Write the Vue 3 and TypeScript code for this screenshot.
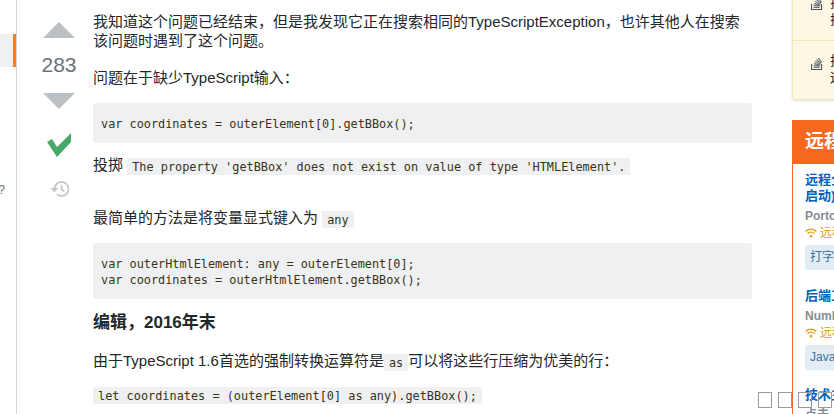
<template>
  <div class="page">
    <nav class="leftnav">
      <div class="nav-active"></div>
      <div class="nav-help">?</div>
    </nav>

    <div class="votes">
      <div class="arrow-up"></div>
      <div class="count">283</div>
      <div class="arrow-down"></div>
      <svg class="check" width="24" height="24" viewBox="0 0 24 24">
        <path d="M0 9 L5 6 L10 14 L24 0 L24 9 L10 24 Z" fill="#48a868" />
      </svg>
      <svg class="history" width="19" height="18" viewBox="0 0 19 18">
        <path d="M4.5 9a7 7 0 1 1 2.2 5.1" fill="none" stroke="#c4c8cc" stroke-width="1.8" />
        <path d="M0.5 8h8l-4 4.5z" fill="#c4c8cc" />
        <path d="M11.5 5v4.5l3 2" fill="none" stroke="#c4c8cc" stroke-width="1.6" />
      </svg>
    </div>

    <main class="post">
      <p class="first">我知道这个问题已经结束，但是我发现它正在搜索相同的TypeScriptException，也许其他人在搜索该问题时遇到了这个问题。</p>
      <p>问题在于缺少TypeScript输入：</p>
      <pre class="block">var coordinates = outerElement[0].getBBox();</pre>
      <p class="thrown">投掷 <code>The property 'getBBox' does not exist on value of type 'HTMLElement'.</code></p>
      <p class="simple">最简单的方法是将变量显式键入为 <code>any</code></p>
      <pre class="block second">var outerHtmlElement: any = outerElement[0];
var coordinates = outerHtmlElement.getBBox();</pre>
      <h2>编辑，2016年末</h2>
      <p class="since">由于TypeScript 1.6首选的强制转换运算符是<code>as</code>可以将这些行压缩为优美的行：</p>
      <p class="last"><code>let coordinates = (outerElement[0] as any).getBBox();</code></p>
    </main>

    <aside class="side">
      <div class="notice">
        <div class="notice-row first-row">
          <svg class="so" width="12" height="15" viewBox="0 0 12 15">
            <path d="M0.5 9v5.5h10V9" fill="none" stroke="#50555a" stroke-width="1.2" />
            <path d="M2.5 12.5h6M2.6 10.6l6 .5M3 8.6l5.8 1.5M4 6.6l5.3 2.6M5.4 4.6l4.6 3.6M7.2 3l3.4 4.4" fill="none" stroke="#6a737c" stroke-width="1.1" />
          </svg>
          <span class="notice-text">拉<br />拉</span>
        </div>
        <div class="notice-row">
          <svg class="so" width="12" height="15" viewBox="0 0 12 15">
            <path d="M0.5 9v5.5h10V9" fill="none" stroke="#50555a" stroke-width="1.2" />
            <path d="M2.5 12.5h6M2.6 10.6l6 .5M3 8.6l5.8 1.5M4 6.6l5.3 2.6M5.4 4.6l4.6 3.6M7.2 3l3.4 4.4" fill="none" stroke="#6a737c" stroke-width="1.1" />
          </svg>
          <span class="notice-text">拉<br />远</span>
        </div>
      </div>

      <div class="jobs">
        <div class="jobs-head">远程工作</div>
        <div class="jobs-body">
          <div v-for="job in jobs" :key="job.org" class="job">
            <div class="job-title">
              <template v-for="(line, i) in job.title" :key="line"><br v-if="i" />{{ line }}</template>
            </div>
            <div class="job-org">{{ job.org }}</div>
            <div v-if="job.tag" class="job-remote">
              <svg width="12" height="10" viewBox="0 0 12 10">
                <path d="M0.6 3.4a7.8 7.8 0 0 1 10.8 0M2.5 5.6a5 5 0 0 1 7 0" fill="none" stroke="#e4a82c" stroke-width="1.5" />
                <circle cx="6" cy="8.2" r="1.4" fill="#e4a82c" />
              </svg>
              <span>远程</span>
            </div>
            <div v-if="job.tag" class="job-tag">{{ job.tag }}</div>
          </div>
        </div>
      </div>
    </aside>

    <div class="tofu">
      <span v-for="n in 4" :key="n" class="tofu-box"></span>
    </div>
  </div>
</template>

<script setup lang="ts">
interface Job {
  title: string[];
  org: string;
  tag?: string;
}

const jobs: Job[] = [
  { title: ['远程全栈工程师', '启动)'], org: 'Portol', tag: '打字稿' },
  { title: ['后端工程师'], org: 'Numbers', tag: 'Java' },
  { title: ['技术主管'], org: '点击' }
];
</script>

<style>
html,
body {
  margin: 0;
  overflow: hidden;
  background: #fff;
}
</style>

<style scoped>
.page {
  position: relative;
  display: flex;
  width: 834px;
  height: 414px;
  overflow: hidden;
  font-family: Arial, "Liberation Sans", "Noto Sans CJK SC", sans-serif;
  color: #242729;
}

.leftnav {
  flex: none;
  width: 16px;
  height: 414px;
  border-right: 1px solid #d6d9dc;
  padding-top: 34px;
  box-sizing: content-box;
}

.nav-active {
  height: 33px;
  background: #eff0f1;
  border-right: 3px solid #f48024;
  box-sizing: border-box;
}

.nav-help {
  margin-top: 116px;
  margin-left: -2px;
  font-size: 13px;
  line-height: 14px;
  color: #6a737c;
}

.votes {
  flex: none;
  width: 76px;
  height: 414px;
  display: flex;
  flex-direction: column;
  align-items: center;
  padding: 22px 0 0 8px;
  box-sizing: border-box;
}

.arrow-up,
.arrow-down {
  width: 0;
  height: 0;
  border-left: 16px solid transparent;
  border-right: 16px solid transparent;
}

.arrow-up {
  border-bottom: 16px solid #bbc0c4;
}

.arrow-down {
  border-top: 16px solid #bbc0c4;
}

.count {
  font-size: 21px;
  line-height: 30px;
  margin: 12px 0 13px;
  color: #6a737c;
}

.check {
  margin-top: 24px;
}

.history {
  margin-top: 23px;
}

.post {
  flex: none;
  width: 659px;
  font-size: 15px;
  line-height: 19px;
  padding-top: 12px;
}

.post p {
  margin: 0 0 16px;
}

.post .first {
  margin-bottom: 18px;
}

.block {
  margin: 0 0 12px;
  padding: 13px 8px 11px;
  background: #eff0f1;
  border-radius: 3px;
  font-family: "DejaVu Sans Mono", monospace;
  font-size: 11.85px;
  line-height: 16px;
  color: #393318;
}

.block.second {
  margin-bottom: 13px;
}

code {
  font-family: "DejaVu Sans Mono", monospace;
  font-size: 11.88px;
  background: #eff0f1;
  padding: 1.5px 5px;
  color: #393318;
}

.post .thrown {
  margin-bottom: 32px;
}

.post .simple {
  margin-bottom: 14px;
}

.post .since {
  margin-bottom: 12px;
}

h2 {
  margin: 0 0 17px;
  font-size: 17px;
  line-height: 22px;
  font-weight: 700;
}

.side {
  flex: none;
  width: 42px;
  margin-left: 40px;
  height: 414px;
  white-space: nowrap;
}

.notice {
  display: flow-root;
  width: 200px;
  height: 100px;
  background: #fdf7e3;
  border: 1px solid #f1e5bc;
  border-top: none;
  border-radius: 0 0 3px 3px;
  box-shadow: 0 1px 3px rgba(0, 0, 0, 0.12);
  box-sizing: border-box;
}

.notice-row {
  display: flex;
  gap: 7px;
  padding: 11px 0 0 18px;
  font-size: 13px;
  line-height: 17px;
}

.notice-row.first-row {
  height: 46px;
  margin-top: -6px;
  padding-top: 0;
  border-bottom: 1px solid #f1e5bc;
}

.so {
  flex: none;
  margin-top: 3px;
}

.first-row .so {
  margin-top: 1px;
}

.jobs {
  width: 260px;
  margin-top: 20px;
}

.jobs-head {
  height: 44px;
  background: #f4691f;
  color: #fff;
  font-size: 19px;
  font-weight: 700;
  line-height: 44px;
  padding-left: 13px;
}

.jobs-body {
  border-left: 1px solid #f4691f;
  padding: 8px 0 0 12px;
  height: 260px;
}

.job {
  margin-bottom: 17px;
}

.job:first-child {
  margin-bottom: 18px;
}

.job-title {
  font-size: 13px;
  line-height: 16px;
  font-weight: 600;
  color: #0062b8;
}

.job-org {
  font-size: 12px;
  line-height: 16px;
  color: #848d95;
  font-weight: 600;
  margin-top: 4px;
}

.job-remote {
  display: flex;
  align-items: center;
  gap: 3px;
  font-size: 12px;
  line-height: 16px;
  color: #d9a01e;
  margin-top: 1px;
}

.job-tag {
  display: inline-block;
  margin-top: 4px;
  padding: 0 5px;
  background: #e1ecf4;
  border-radius: 3px;
  color: #39739d;
  font-size: 12px;
  line-height: 25px;
}

/* missing-glyph boxes that sit over the page corner */
.tofu {
  position: absolute;
  left: 758px;
  top: 392px;
  display: flex;
  gap: 6px;
}

.tofu-box {
  width: 14px;
  height: 16px;
  border: 1.5px solid #9a9a9a;
  box-sizing: border-box;
}
</style>
